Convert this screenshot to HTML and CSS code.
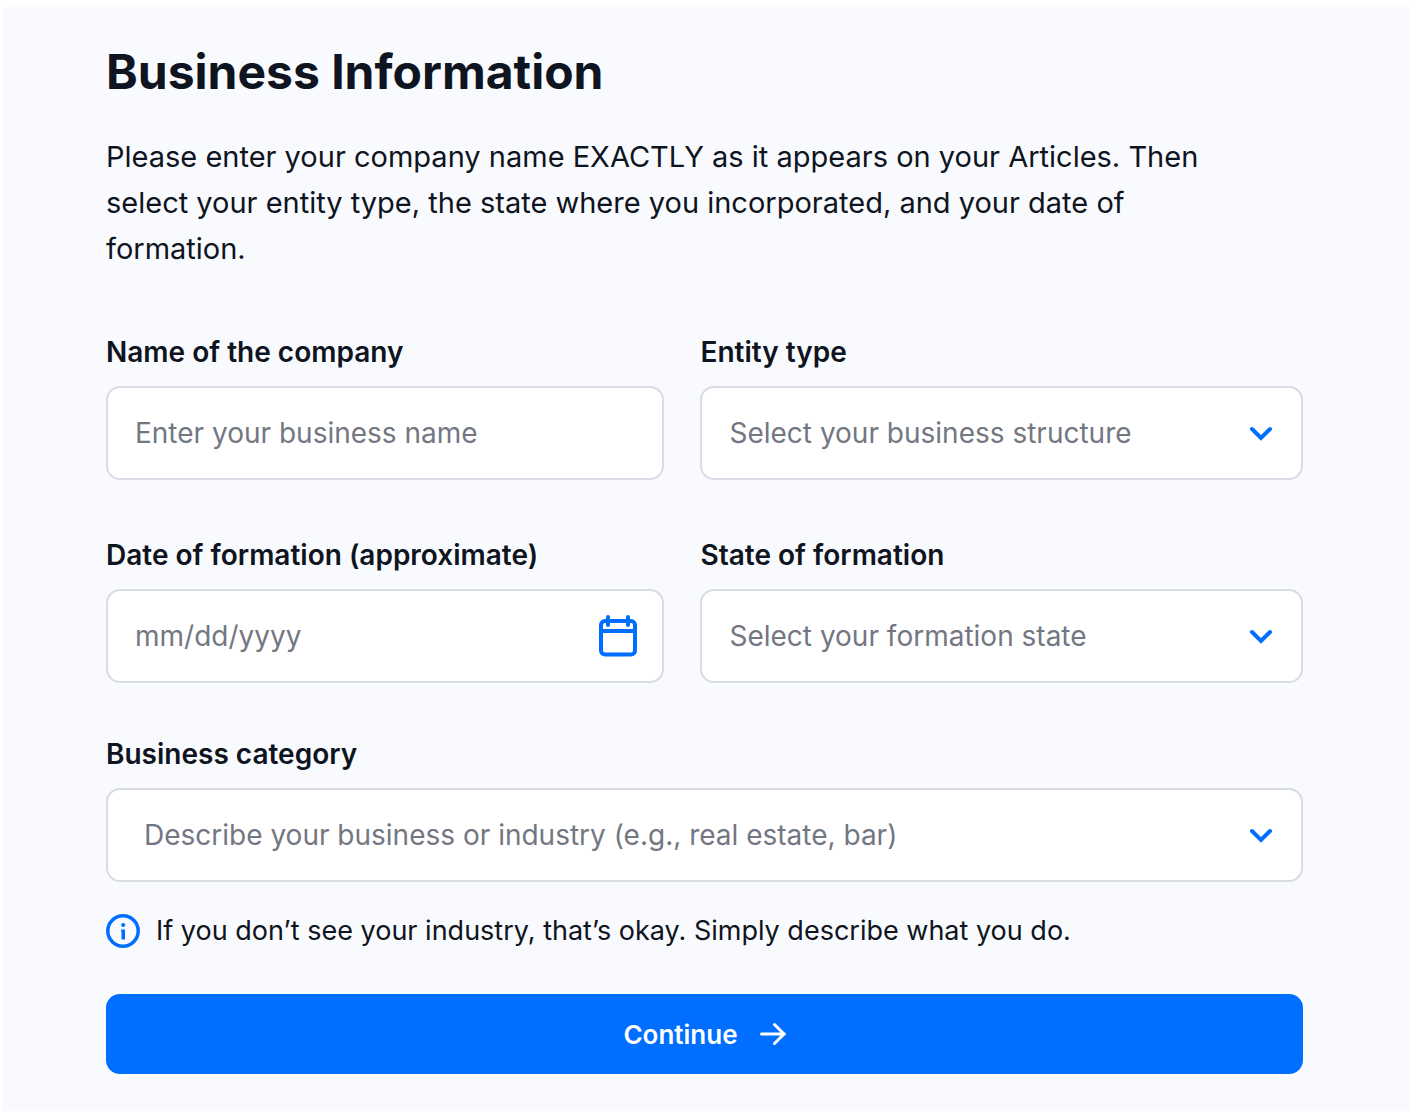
FILE: index.html
```html
<!DOCTYPE html>
<html lang="en">
<head>
  <meta charset="UTF-8">
  <meta name="viewport" content="width=device-width, initial-scale=1.0">
  <title>Business Information</title>
  <link rel="stylesheet" href="styles.css">
</head>
<body>
  <main class="panel">
    <h1>Business Information</h1>
    <p class="intro">Please enter your company name EXACTLY as it appears on your Articles. Then select your entity type, the state where you incorporated, and your date of formation.</p>

    <form class="business-form">
      <div class="form-row">
        <div class="field">
          <label for="companyName">Name of the company</label>
          <input type="text" id="companyName" class="control" placeholder="Enter your business name">
        </div>
        <div class="field">
          <label for="entityType">Entity type</label>
          <div class="control-wrap">
            <select id="entityType" class="control">
              <option value="">Select your business structure</option>
            </select>
            <svg class="chevron" viewBox="0 0 24 16" aria-hidden="true"><path d="M3 4l9 9 9-9"/></svg>
          </div>
        </div>
      </div>

      <div class="form-row form-row-last">
        <div class="field">
          <label for="formationDate">Date of formation (approximate)</label>
          <div class="control-wrap">
            <input type="text" id="formationDate" class="control" placeholder="mm/dd/yyyy">
            <svg class="calendar" viewBox="0 0 38 42" aria-hidden="true">
              <rect x="2" y="6" width="34" height="33.500" rx="4"/>
              <path d="M2 16h34M9 2v8M29 2v8"/>
            </svg>
          </div>
        </div>
        <div class="field">
          <label for="formationState">State of formation</label>
          <div class="control-wrap">
            <select id="formationState" class="control">
              <option value="">Select your formation state</option>
            </select>
            <svg class="chevron" viewBox="0 0 24 16" aria-hidden="true"><path d="M3 4l9 9 9-9"/></svg>
          </div>
        </div>
      </div>

      <div class="field">
        <label for="category">Business category</label>
        <div class="control-wrap">
          <select id="category" class="control control-wide">
            <option value="">Describe your business or industry (e.g., real estate, bar)</option>
          </select>
          <svg class="chevron" viewBox="0 0 24 16" aria-hidden="true"><path d="M3 4l9 9 9-9"/></svg>
        </div>
      </div>

      <p class="hint">
        <svg class="info" viewBox="0 0 34 34" aria-hidden="true">
          <circle class="info-ring" cx="17" cy="17" r="15.200"/>
          <circle cx="17.200" cy="11" r="2.100"/>
          <path d="M15 15.500h4v10h-3.500v-8H15z"/>
        </svg>
        <span>If you don’t see your industry, that’s okay. Simply describe what you do.</span>
      </p>

      <button type="submit" class="continue">
        <span>Continue</span>
        <svg class="arrow" viewBox="0 0 26 24" aria-hidden="true"><path d="M1.500 12h23M14.500 2.500l9.500 9.500-9.500 9.500"/></svg>
      </button>
    </form>
  </main>
</body>
</html>
```

FILE: styles.css
```css
* {
  box-sizing: border-box;
}
body {
  margin: 0;
  padding: 7px 6px 0 3px;
  background-color: #fff;
  color: #0e1420;
  font-family: Inter, "Liberation Sans", sans-serif;
}
.panel {
  min-height: calc(100vh - 7px);
  padding: 32px 107px 32px 103px;
  background-color: #f9fafe;
}
h1 {
  margin: 0 0 29px;
  font-size: 48px;
  line-height: 66px;
  font-weight: 700;
}
.intro {
  max-width: 1120px;
  margin: 0 0 64px;
  font-size: 29px;
  line-height: 46px;
}
.form-row {
  display: grid;
  grid-template-columns: 558fr 602fr;
  gap: 36px;
  margin-bottom: 59px;
}
.form-row-last {
  margin-bottom: 55px;
}
label {
  display: block;
  margin-bottom: 18px;
  font-size: 28px;
  line-height: 32px;
  font-weight: 600;
}
.control-wrap {
  position: relative;
}
.control {
  display: block;
  width: 100%;
  height: 94px;
  padding: 0 27px;
  border: 2px solid #dadce5;
  border-radius: 14px;
  background-color: #fff;
  color: #727782;
  font: inherit;
  font-size: 28px;
  appearance: none;
}
.control::placeholder {
  color: #727782;
  opacity: 1;
}
.control-wide {
  padding-left: 36px;
}
.chevron,
.calendar {
  position: absolute;
  top: 0;
  bottom: 0;
  margin: auto 0;
  fill: none;
  stroke: #006fff;
  stroke-width: 4;
  stroke-linecap: round;
  pointer-events: none;
}
.chevron {
  right: 30px;
  width: 24px;
  height: 16px;
}
.calendar {
  right: 27px;
  width: 38px;
  height: 42px;
}
.hint {
  display: flex;
  align-items: center;
  gap: 16px;
  margin: 29px 0 43px;
  font-size: 27px;
  line-height: 40px;
}
.info {
  flex: none;
  width: 34px;
  height: 34px;
  fill: #006fff;
}
.info-ring {
  fill: none;
  stroke: #006fff;
  stroke-width: 3.5;
}
.continue {
  display: flex;
  align-items: center;
  justify-content: center;
  gap: 22px;
  width: 100%;
  height: 80px;
  border: none;
  border-radius: 14px;
  background-color: #006fff;
  color: #fff;
  font: inherit;
  font-size: 26px;
  font-weight: 600;
  cursor: pointer;
}
.arrow {
  width: 26px;
  height: 24px;
  fill: none;
  stroke: #fff;
  stroke-width: 3;
  stroke-linecap: round;
  stroke-linejoin: round;
}
```
